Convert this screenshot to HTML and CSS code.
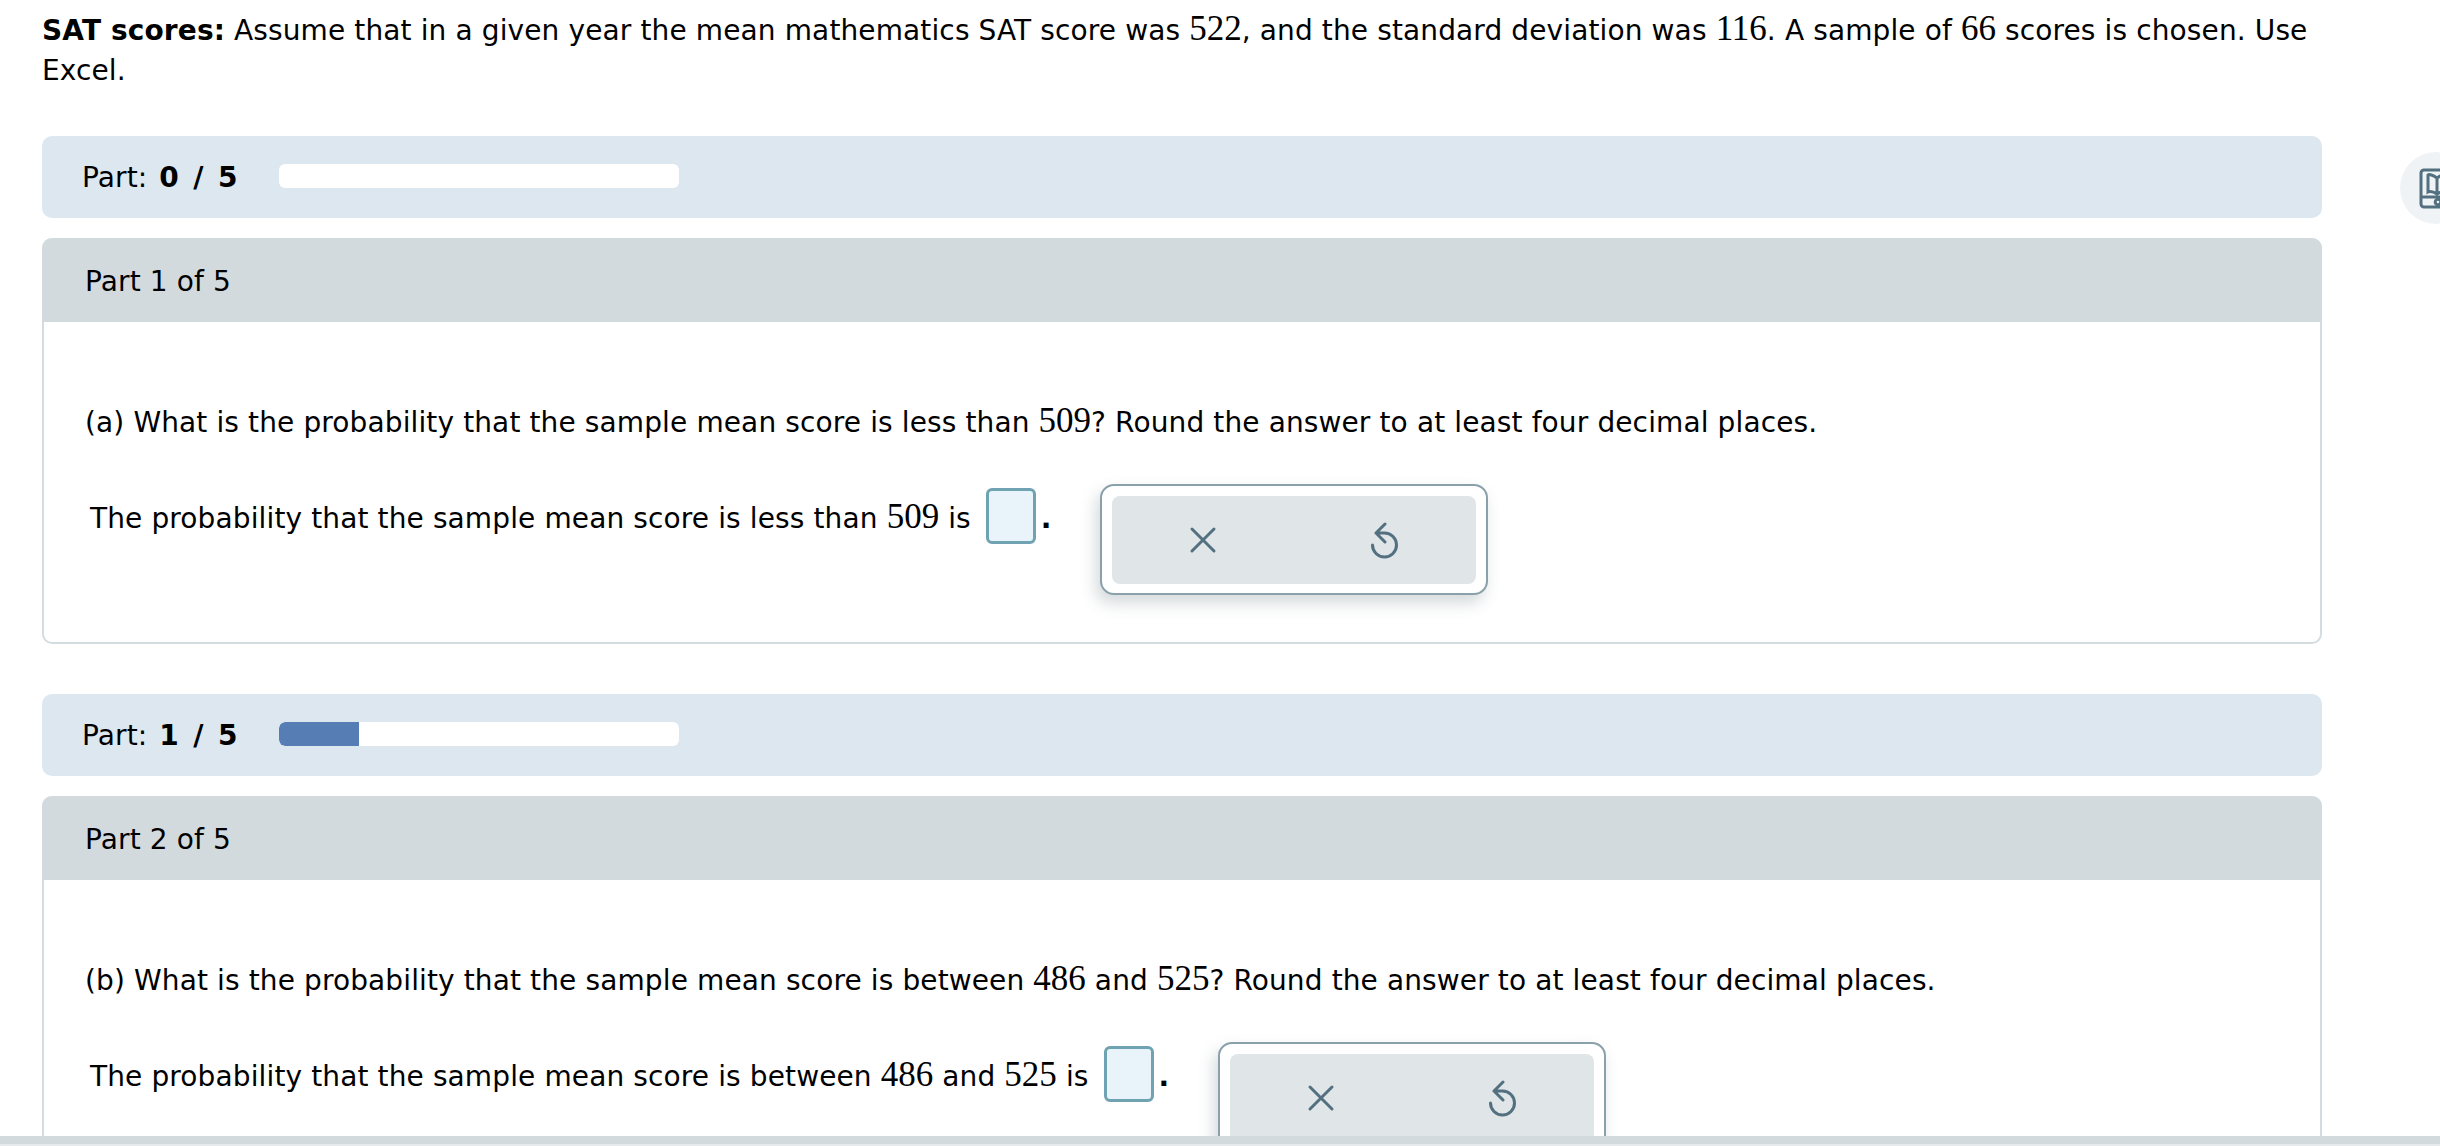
FILE: index.html
```html
<!DOCTYPE html>
<html lang="en">
<head>
<meta charset="utf-8">
<title>SAT scores</title>
<link rel="stylesheet" href="styles.css">
</head>
<body>
<main class="page">
  <p class="intro"><b>SAT scores:</b> Assume that in a given year the mean mathematics SAT score was <span class="num">522</span>, and the standard deviation was <span class="num">116</span>. A sample of <span class="num">66</span> scores is chosen. Use Excel.</p>

  <section class="part">
    <div class="progress"><span class="progress-label">Part: <b>0 / 5</b></span><div class="track"></div></div>
    <div class="card">
      <div class="card-head">Part 1 of 5</div>
      <div class="card-body">
        <p class="question">(a) What is the probability that the sample mean score is less than <span class="num">509</span>? Round the answer to at least four decimal places.</p>
        <div class="answer">
          <span class="answer-text">The probability that the sample mean score is less than <span class="num">509</span> is</span>
          <span class="box"></span><span class="dot">.</span>
          <div class="tools">
            <div class="tools-inner">
              <svg class="ico-x" width="28" height="28" viewBox="0 0 28 28"><path d="M3 3 L25 25 M25 3 L3 25"/></svg>
              <svg class="ico-undo" width="32" height="38" viewBox="0 0 32 38"><path d="M16 2 L7 11 L16 20 M7 11 H15.5 A12 12 0 1 1 3.5 23"/></svg>
            </div>
          </div>
        </div>
      </div>
    </div>
  </section>

  <section class="part">
    <div class="progress"><span class="progress-label">Part: <b>1 / 5</b></span><div class="track"><div class="fill" style="width:20%"></div></div></div>
    <div class="card">
      <div class="card-head">Part 2 of 5</div>
      <div class="card-body">
        <p class="question">(b) What is the probability that the sample mean score is between <span class="num">486</span> and <span class="num">525</span>? Round the answer to at least four decimal places.</p>
        <div class="answer">
          <span class="answer-text">The probability that the sample mean score is between <span class="num">486</span> and <span class="num">525</span> is</span>
          <span class="box"></span><span class="dot">.</span>
          <div class="tools">
            <div class="tools-inner">
              <svg class="ico-x" width="28" height="28" viewBox="0 0 28 28"><path d="M3 3 L25 25 M25 3 L3 25"/></svg>
              <svg class="ico-undo" width="32" height="38" viewBox="0 0 32 38"><path d="M16 2 L7 11 L16 20 M7 11 H15.5 A12 12 0 1 1 3.5 23"/></svg>
            </div>
          </div>
        </div>
      </div>
    </div>
  </section>
</main>

<button class="side-btn" type="button" aria-label="eBook">
  <svg width="40" height="44" viewBox="0 0 40 44"><rect x="2" y="2" width="34" height="37" rx="3"/><path d="M2 29 H36 M18 10 C14 7 10 6 9 7 V24 C11 23 15 24 18 26 C21 24 25 23 27 24 V7 C26 6 22 7 18 10 V26"/><circle cx="19" cy="34" r="2.8"/></svg>
</button>
<div class="bottom-bar"></div>
</body>
</html>
```
FILE: styles.css
```css
html, body {
  margin: 0;
  height: 100%;
  overflow: hidden;
  background: #fff;
}
body {
  font-family: "DejaVu Sans", Verdana, sans-serif;
  font-size: 28px;
  letter-spacing: 0.12px;
  line-height: 40px;
  color: #000;
}
.page {
  width: 2280px;
  padding: 11px 0 0 42px;
}
.intro {
  margin: 0 0 45px;
}
.num {
  font-family: "Liberation Serif", "Times New Roman", serif;
  font-size: 35px;
  line-height: 0;
  letter-spacing: 0;
}
.part {
  margin-bottom: 50px;
}
.progress {
  display: flex;
  align-items: center;
  box-sizing: border-box;
  height: 82px;
  padding-left: 40px;
  background: #dde7f0;
  border-radius: 10px;
}
.progress-label {
  width: 197px;
  padding-top: 2px;
}
.progress-label b {
  margin-left: 3px;
  word-spacing: 4.5px;
}
.track {
  width: 400px;
  height: 24px;
  background: #fff;
  border-radius: 6px;
  overflow: hidden;
  margin-top: -2px;
}
.fill {
  height: 100%;
  background: #567db4;
  border-radius: 6px 0 0 6px;
}
.card {
  margin-top: 20px;
  border-radius: 10px;
  border: 2px solid #d5dcdf;
  border-top: 0;
}
.card-head {
  box-sizing: border-box;
  height: 84px;
  margin: 0 -2px;
  padding: 4px 0 0 43px;
  display: flex;
  align-items: center;
  background: #d3dade;
  border-radius: 10px 10px 0 0;
}
.card-body {
  height: 320px;
  padding: 81px 0 0 41px;
  box-sizing: border-box;
}
.question {
  margin: 0 0 41px;
}
.answer {
  display: flex;
  align-items: flex-start;
  padding-left: 5px;
}
.answer-text {
  margin-top: 15px;
  white-space: nowrap;
}
.box {
  width: 50px;
  height: 56px;
  box-sizing: border-box;
  margin: 4px 0 0 15px;
  background: #e8f4fa;
  border: 3px solid #6fa3b2;
  border-radius: 6px;
  flex: none;
}
.dot {
  margin: 15px 0 0 5px;
  width: 12px;
  font-weight: bold;
}
.tools {
  margin-left: 47px;
  width: 388px;
  height: 111px;
  box-sizing: border-box;
  padding: 10px;
  background: #fff;
  border: 2px solid #8aa0aa;
  border-radius: 14px;
  box-shadow: -4px 8px 16px rgba(60, 80, 90, 0.22);
  flex: none;
}
.tools-inner {
  height: 88px;
  display: flex;
  align-items: center;
  background: #e0e5e8;
  border-radius: 8px;
  padding-left: 77px;
}
.ico-x path,
.ico-undo path {
  fill: none;
  stroke: #527080;
  stroke-width: 3;
  stroke-linecap: round;
  stroke-linejoin: round;
}
.ico-undo {
  margin-left: 152px;
  margin-top: 2px;
}
.side-btn {
  position: fixed;
  top: 152px;
  left: 2400px;
  width: 72px;
  height: 72px;
  padding: 16px 0 0 19px;
  border: 0;
  border-radius: 50%;
  background: #f0f3f5;
  display: flex;
  align-items: flex-start;
}
.side-btn svg {
  display: block;
  flex: none;
}
.side-btn rect,
.side-btn path,
.side-btn circle {
  fill: none;
  stroke: #527080;
  stroke-width: 3;
}
.bottom-bar {
  position: fixed;
  left: 0;
  right: 0;
  bottom: 0;
  height: 8px;
  border-bottom: 2px solid #e6eaec;
  background: #d3dade;
}
```
